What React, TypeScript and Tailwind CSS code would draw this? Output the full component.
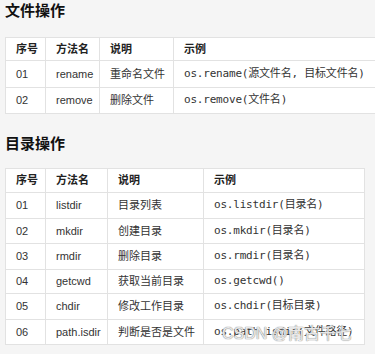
import React from 'react';

const fileOps = [
  { no: '01', name: 'rename', desc: '重命名文件', example: 'os.rename(源文件名, 目标文件名)' },
  { no: '02', name: 'remove', desc: '删除文件', example: 'os.remove(文件名)' },
];

const dirOps = [
  { no: '01', name: 'listdir', desc: '目录列表', example: 'os.listdir(目录名)' },
  { no: '02', name: 'mkdir', desc: '创建目录', example: 'os.mkdir(目录名)' },
  { no: '03', name: 'rmdir', desc: '删除目录', example: 'os.rmdir(目录名)' },
  { no: '04', name: 'getcwd', desc: '获取当前目录', example: 'os.getcwd()' },
  { no: '05', name: 'chdir', desc: '修改工作目录', example: 'os.chdir(目标目录)' },
  { no: '06', name: 'path.isdir', desc: '判断是否是文件', example: 'os.path.isdir(文件路径)' },
];

type Row = { no: string; name: string; desc: string; example: string };

const sans = "font-['Liberation_Sans','Noto_Sans_CJK_SC',sans-serif]";
const mono = "font-['DejaVu_Sans_Mono','Noto_Sans_CJK_SC',monospace]";

function OpsTable({ rows, cols, width, rowHeights }: { rows: Row[]; cols: string; width: string; rowHeights: string[] }) {
  const cell = 'flex items-center px-[10px] border-r border-[#e2e2e2] whitespace-nowrap';
  return (
    <div className={`${width} bg-white border-t border-l border-[#e2e2e2] text-[11px] ${sans}`}>
      <div className={`grid ${cols} ${rowHeights[0]} border-b border-[#e2e2e2] font-bold text-[#222]`}>
        <div className={cell}>序号</div>
        <div className={cell}>方法名</div>
        <div className={cell}>说明</div>
        <div className={cell}>示例</div>
      </div>
      {rows.map((r, i) => (
        <div key={r.no} className={`grid ${cols} ${rowHeights[i + 1]} border-b border-[#e2e2e2] text-[#333]`}>
          <div className={cell}>{r.no}</div>
          <div className={cell}>{r.name}</div>
          <div className={cell}>{r.desc}</div>
          <div className={`${cell} ${mono} tracking-[-0.2px]`}>{r.example}</div>
        </div>
      ))}
    </div>
  );
}

export default function App() {
  return (
    <div className="relative w-[375px] h-[354px] overflow-hidden bg-[#f5f5f5] pl-[5px]">
      <h2 className={`text-[15px] leading-[22px] font-bold text-[#111] ${sans}`}>文件操作</h2>
      <div className="mt-[15px]">
        <OpsTable
          rows={fileOps}
          cols="grid-cols-[40px_54px_74px_1fr]"
          width="w-[420px]"
          rowHeights={['h-[23px]', 'h-[27px]', 'h-[26px]']}
        />
      </div>

      <h2 className={`mt-[19px] text-[15px] leading-[22px] font-bold text-[#111] ${sans}`}>目录操作</h2>
      <div className="mt-[13px]">
        <OpsTable
          rows={dirOps}
          cols="grid-cols-[40px_62px_96px_161px]"
          width="w-[360px]"
          rowHeights={['h-[24px]', 'h-[26px]', 'h-[25px]', 'h-[26px]', 'h-[24px]', 'h-[26px]', 'h-[25px]']}
        />
      </div>

      {/* watermark */}
      <div
        className={`absolute left-[222px] top-[324px] text-[16px] leading-[20px] text-white/80 [text-shadow:0_0_1px_#888,0_0_1px_#888] ${sans}`}
      >
        CSDN @南古千七
      </div>
    </div>
  );
}
